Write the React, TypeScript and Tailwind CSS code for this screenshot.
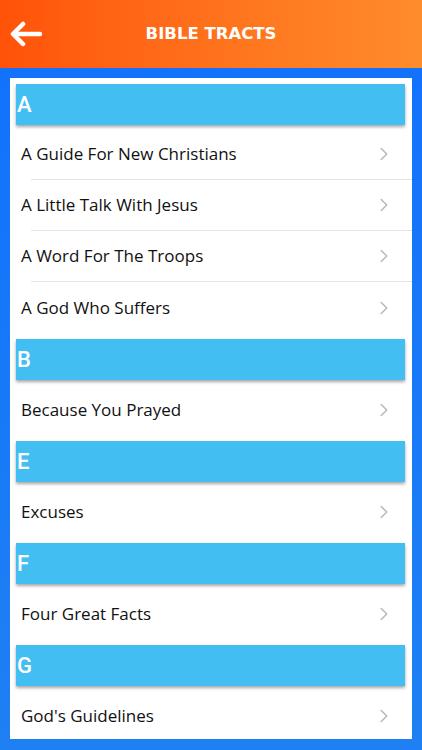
import { ChevronRight } from "lucide-react";

type Section = { letter: string; items: string[] };

const sections: Section[] = [
  {
    letter: "A",
    items: [
      "A Guide For New Christians",
      "A Little Talk With Jesus",
      "A Word For The Troops",
      "A God Who Suffers",
    ],
  },
  { letter: "B", items: ["Because You Prayed"] },
  { letter: "E", items: ["Excuses"] },
  { letter: "F", items: ["Four Great Facts"] },
  { letter: "G", items: ["God's Guidelines"] },
];

export default function App() {
  return (
    <div className="w-[422px] h-[750px] overflow-hidden flex flex-col bg-[#1877f8] font-['Open_Sans',sans-serif]">
      {/* top bar */}
      <div className="h-[68px] shrink-0 flex items-center relative bg-gradient-to-r from-[#ff5208] to-[#ff8c2a]">
        <button className="ml-[10px] w-[32px] h-[32px] flex items-center justify-center text-white">
          <svg width="32" height="26" viewBox="0 0 32 26" fill="none">
            <path
              d="M30 13H4M13 3L3 13l10 10"
              stroke="white"
              strokeWidth="4.5"
              strokeLinecap="round"
              strokeLinejoin="round"
            />
          </svg>
        </button>
        <h1 className="absolute left-0 right-0 text-center text-white font-bold text-[16.5px] pointer-events-none font-['DejaVu_Sans',sans-serif]">
          BIBLE TRACTS
        </h1>
      </div>

      {/* content */}
      <div className="flex-1 min-h-0 bg-gradient-to-b from-[#1272fc] to-[#1f80f3] px-[10px] pt-[10px] pb-[11px]">
        <div className="h-full overflow-hidden bg-white pl-[6px] pr-[7px]">
          {sections.map((s) => (
            <div key={s.letter}>
              <div className="mt-[6px] mb-[4px] h-[41px] bg-[#42bef3] flex items-center shadow-[0_2px_3px_rgba(0,0,0,0.35)] relative z-10">
                <span className="pl-[1px] text-white text-[22px] font-medium font-['Roboto',sans-serif]">
                  {s.letter}
                </span>
              </div>
              {s.items.map((item, i) => (
                <div
                  key={item}
                  className={
                    i < s.items.length - 1
                      ? "h-[51px] flex items-center border-b border-[#e3e3e3] ml-[15px] -mr-[7px]"
                      : "h-[51px] flex items-center ml-[15px] -mr-[7px]"
                  }
                >
                  <span className="-ml-[10px] flex-1 text-[17px] text-[#111111]">{item}</span>
                  <ChevronRight size={22} strokeWidth={1.7} className="text-[#b8b8bd] mr-[17px]" />
                </div>
              ))}
            </div>
          ))}
        </div>
      </div>
    </div>
  );
}
